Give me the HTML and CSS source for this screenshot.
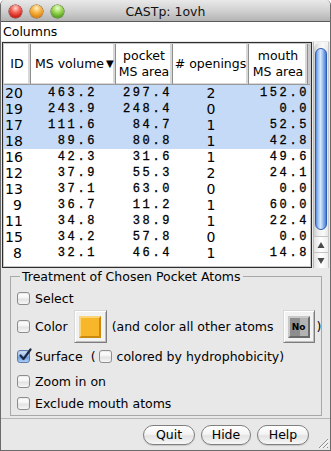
FILE: index.html
```html
<!DOCTYPE html>
<html>
<head>
<meta charset="utf-8">
<title>CASTp: 1ovh</title>
<link rel="stylesheet" href="styles.css">
</head>
<body>
<div class="window">
  <div class="titlebar">
    <div class="lights">
      <span class="light red"></span>
      <span class="light yellow"></span>
      <span class="light green"></span>
    </div>
    <div class="title">CASTp: 1ovh</div>
    <div></div>
  </div>
  <div class="menubar">Columns</div>
  <div class="tablearea">
    <div class="frame">
      <div class="thead">
        <div class="th">ID</div>
        <div class="th vol">MS volume<span class="tri">▼</span></div>
        <div class="th">pocket<br>MS area</div>
        <div class="th"># openings</div>
        <div class="th">mouth<br>MS area</div>
      </div>
      <div class="tbody">
        <div class="row sel"><span class="id">20</span><span class="num vol">463.2</span><span class="num poc">297.4</span><span class="op">2</span><span class="num mo">152.0</span></div>
        <div class="row sel"><span class="id">19</span><span class="num vol">243.9</span><span class="num poc">248.4</span><span class="op">0</span><span class="num mo">0.0</span></div>
        <div class="row sel"><span class="id">17</span><span class="num vol">111.6</span><span class="num poc">84.7</span><span class="op">1</span><span class="num mo">52.5</span></div>
        <div class="row sel"><span class="id">18</span><span class="num vol">89.6</span><span class="num poc">80.8</span><span class="op">1</span><span class="num mo">42.8</span></div>
        <div class="row"><span class="id">16</span><span class="num vol">42.3</span><span class="num poc">31.6</span><span class="op">1</span><span class="num mo">49.6</span></div>
        <div class="row"><span class="id">12</span><span class="num vol">37.9</span><span class="num poc">55.3</span><span class="op">2</span><span class="num mo">24.1</span></div>
        <div class="row"><span class="id">13</span><span class="num vol">37.1</span><span class="num poc">63.0</span><span class="op">0</span><span class="num mo">0.0</span></div>
        <div class="row"><span class="id one">9</span><span class="num vol">36.7</span><span class="num poc">11.2</span><span class="op">1</span><span class="num mo">60.0</span></div>
        <div class="row"><span class="id">11</span><span class="num vol">34.8</span><span class="num poc">38.9</span><span class="op">1</span><span class="num mo">22.4</span></div>
        <div class="row"><span class="id">15</span><span class="num vol">34.2</span><span class="num poc">57.8</span><span class="op">0</span><span class="num mo">0.0</span></div>
        <div class="row"><span class="id one">8</span><span class="num vol">32.1</span><span class="num poc">46.4</span><span class="op">1</span><span class="num mo">14.8</span></div>
      </div>
    </div>
    <div class="scrollbar">
      <div class="track"><div class="thumb"></div></div>
      <div class="arrow up"><svg width="16" height="16" viewBox="0 0 16 16"><polygon points="8,5 11.5,11 4.5,11" fill="#4a4a4a"/></svg></div>
      <div class="arrow down"><svg width="16" height="16" viewBox="0 0 16 16"><polygon points="4.5,5 11.5,5 8,11" fill="#4a4a4a"/></svg></div>
    </div>
  </div>
  <div class="lower">
    <fieldset class="group">
      <legend>Treatment of Chosen Pocket Atoms</legend>
      <div class="opt r-select"><span class="cb"></span><span class="lbl">Select</span></div>
      <div class="opt r-color">
        <span class="cb"></span><span class="lbl">Color</span>
        <span class="swatch"><span class="swatch-in"></span></span>
        <span class="lbl after">(and color all other atoms</span>
        <span class="swatch nobtn"><span class="no-in">No</span></span>
        <span class="paren">)</span>
      </div>
      <div class="opt r-surface">
        <span class="cb checked"><svg class="check" width="14" height="14" viewBox="0 0 14 14"><path d="M2.5 7.5 L5.5 11 L12.5 1.5" fill="none" stroke="#1d2a44" stroke-width="2.2" stroke-linecap="round" stroke-linejoin="round"/></svg></span>
        <span class="lbl">Surface</span>
        <span class="lbl open">(</span>
        <span class="cb inner"></span>
        <span class="lbl">colored by hydrophobicity)</span>
      </div>
      <div class="opt r-zoom"><span class="cb"></span><span class="lbl">Zoom in on</span></div>
      <div class="opt r-excl"><span class="cb"></span><span class="lbl">Exclude mouth atoms</span></div>
    </fieldset>
  </div>
  <div class="buttons">
    <button class="btn b-quit">Quit</button>
    <button class="btn b-hide">Hide</button>
    <button class="btn b-help">Help</button>
  </div>
  <svg class="grip" width="11" height="11" viewBox="0 0 11 11">
    <path d="M10 1 L1 10 M10 5 L5 10 M10 9 L9 10" stroke="#8c8c8c" stroke-width="1"/>
    <path d="M10.5 2 L2 10.5 M10.5 6 L6 10.5" stroke="#ffffff" stroke-width="1"/>
  </svg>
</div>
</body>
</html>
```

FILE: styles.css
```css
* { box-sizing: border-box; }
html, body { margin: 0; padding: 0; }
body {
  width: 331px;
  height: 451px;
  overflow: hidden;
  background: #ffffff;
  font-family: "DejaVu Sans", "Liberation Sans", sans-serif;
  font-size: 12.5px;
  color: #000;
}
.window {
  position: relative;
  width: 331px;
  height: 451px;
  background: #e8e8e8;
  border: 1px solid #6a6a6a;
  border-top: none;
  border-radius: 5px 5px 0 0;
  overflow: hidden;
  display: flex;
  flex-direction: column;
}

/* title bar */
.titlebar {
  flex: none;
  height: 22px;
  display: grid;
  grid-template-columns: 1fr auto 1fr;
  align-items: center;
  background: linear-gradient(#e9e9e9, #cfcfcf 55%, #b3b3b3);
  border-bottom: 1px solid #595959;
}
.lights { display: flex; gap: 8px; padding-left: 8px; padding-top: 1px; }
.light {
  width: 13px; height: 13px; border-radius: 50%;
  display: block;
}
.red {
  background: radial-gradient(circle at 50% 25%, #ffd6d0 0, #f56b5e 35%, #d2261c 70%, #b01c14 100%);
  box-shadow: 0 0 0 0.5px #7e231c;
}
.yellow {
  background: radial-gradient(circle at 50% 25%, #fff1c6 0, #f7bb52 35%, #e58b15 70%, #c26f0a 100%);
  box-shadow: 0 0 0 0.5px #8c5a10;
}
.green {
  background: radial-gradient(circle at 50% 25%, #eaffd0 0, #a6dc62 35%, #62ab24 70%, #4a8c18 100%);
  box-shadow: 0 0 0 0.5px #3f6e16;
}
.title { font-size: 12.5px; color: #111; padding-top: 1px; }

/* menu */
.menubar {
  flex: none;
  height: 19px;
  line-height: 19px;
  background: #fff;
  padding-left: 2px;
}

/* table */
.tablearea {
  flex: none;
  height: 227px;
  padding-top: 1px;
  display: flex;
  gap: 1px;
  padding-left: 1px;
}
.frame {
  width: 310px;
  height: 226px;
  border: 1px solid #2e2e2e;
  padding: 1px;
  background: #fff;
  box-shadow: inset 0 0 0 1px #c8c8c8;
  display: flex;
  flex-direction: column;
}
.thead {
  flex: none;
  height: 41px;
  display: grid;
  grid-template-columns: 27px 85px 57px 76px 61px;
  background: #c9c9c9;
  border-bottom: 1px solid #9a9a9a;
}
.th {
  background: #fff;
  border-right: 1px solid #8e8e8e;
  box-shadow: inset -2px 0 0 #d8d8d8, inset 0 -1px 0 #d8d8d8;
  display: flex;
  align-items: center;
  justify-content: center;
  text-align: center;
  line-height: 16px;
  font-size: 12.5px;
}
.th:last-child { margin-right: 2px; }
.th.vol { justify-content: flex-start; padding-left: 4px; }
.tri { font-size: 10px; margin-left: 2px; }
.tbody { flex: 1; background: #fff; }
.row {
  height: 16px;
  display: grid;
  grid-template-columns: 27px 85px 57px 76px 61px;
  align-items: center;
  line-height: 16px;
}
.row.sel { background: #c5daf6; }
.id { font-size: 14px; padding-left: 1px; }
.id.one { padding-left: 9px; }
.op { font-size: 14px; text-align: center; }
.num {
  font-family: "Liberation Mono", "DejaVu Sans Mono", monospace;
  font-size: 12px;
  letter-spacing: 2.6px;
  text-align: right;
  -webkit-text-stroke: 0.3px #000;
}
.num.vol { padding-right: 19px; }
.num.poc { padding-right: 1px; }
.num.mo { padding-right: 1px; }

/* scrollbar */
.scrollbar {
  width: 16px;
  height: 226px;
  display: flex;
  flex-direction: column;
  background: #f4f4f4;
  border-left: 1px solid #b9b9b9;
  border-right: 1px solid #c8c8c8;
}
.track {
  flex: 1;
  padding: 6px 1px 4px 1px;
  background: linear-gradient(to right, #cfcfcf, #eeeeee 35%, #fafafa 65%, #e6e6e6);
  border-radius: 7px 7px 0 0;
}
.thumb {
  height: 182px;
  border-radius: 7px;
  border: 1px solid #2d5db1;
  background: linear-gradient(to right, #5b8fe0, #a9c9f5 25%, #d7e7fc 45%, #a3c4f3 65%, #6a9ae3 85%, #4c7fd4);
}
.arrow {
  height: 16px;
  background: linear-gradient(to right, #e2e2e2, #ffffff 50%, #ededed);
  border-top: 1px solid #c3c3c3;
}
.arrow svg { display: block; margin-left: -1px; }

/* lower panel */
.lower {
  flex: none;
  height: 151px;
  padding-top: 1px;
  border-bottom: 1px solid #b7b7b7;
}
.group {
  margin: 0 8px 0 9px;
  padding: 0 0 2px 0;
  border: 1px solid #a8a8a8;
  min-width: 0;
}
.group legend {
  margin-left: 9px;
  padding: 0 2px;
  line-height: 15px;
  font-size: 12.5px;
}
.opt {
  display: flex;
  align-items: center;
  padding-left: 6px;
  height: 20px;
}
.r-select { margin-top: 4px; }
.r-color { margin-top: 2px; height: 33px; }
.r-surface { margin-top: 3px; }
.r-zoom { margin-top: 5px; }
.r-excl { margin-top: 2px; }

.cb {
  position: relative;
  flex: none;
  width: 13px;
  height: 13px;
  border: 1px solid #8d8d8d;
  border-radius: 3px;
  background: linear-gradient(#ffffff, #f4f4f4 45%, #e2e2e2 55%, #f6f6f6);
  box-shadow: inset 0 1px 1px rgba(0,0,0,0.08);
}
.cb.checked {
  border-color: #5a7cad;
  background: linear-gradient(#d8e6f9, #99bdec 45%, #6f9fe0 55%, #aecdf4);
}
.check { position: absolute; left: 0; top: -3px; }
.lbl { margin-left: 5px; white-space: nowrap; }
.lbl.after { margin-left: 5px; }
.lbl.open { margin-left: 8px; margin-right: 3px; }

.swatch {
  flex: none;
  width: 33px;
  height: 33px;
  margin-left: 6px;
  background: #f2f2f2;
  border: 1px solid;
  border-color: #d8d8d8 #7d7d7d #7d7d7d #d8d8d8;
  box-shadow: inset 1px 1px 0 #ffffff, inset -1px -1px 0 #bdbdbd;
  display: flex;
  align-items: center;
  justify-content: center;
}
.swatch-in {
  width: 22px;
  height: 22px;
  background: #f8b62a;
  border: 2px solid;
  border-color: #fcd57a #c98a0e #c98a0e #fcd57a;
}
.nobtn { margin-left: 9px; width: 32px; }
.no-in {
  width: 22px;
  height: 22px;
  background: linear-gradient(to right, #8e8e8e 0, #8e8e8e 55%, #b3b3b3 55%);
  border: 2px solid;
  border-color: #c9c9c9 #6a6a6a #6a6a6a #c9c9c9;
  font-size: 9px;
  font-weight: bold;
  line-height: 18px;
  text-align: center;
  color: #000;
}
.paren { margin-left: 2px; }

/* buttons */
.buttons {
  flex: none;
  display: flex;
  justify-content: flex-end;
  gap: 6px;
  padding-top: 6px;
  padding-right: 21px;
}
.btn {
  height: 20px;
  padding: 0;
  border: 1px solid #7f7f7f;
  border-radius: 10px;
  background: linear-gradient(#ffffff, #f4f4f4 45%, #e3e3e3 55%, #f7f7f7);
  box-shadow: 0 1px 1px rgba(0,0,0,0.15);
  font-family: "DejaVu Sans", sans-serif;
  font-size: 12.5px;
  line-height: 18px;
  color: #000;
}
.b-quit { width: 52px; }
.b-hide { width: 50px; }
.b-help { width: 52px; }

.grip { position: absolute; right: 1px; bottom: 1px; }
```
